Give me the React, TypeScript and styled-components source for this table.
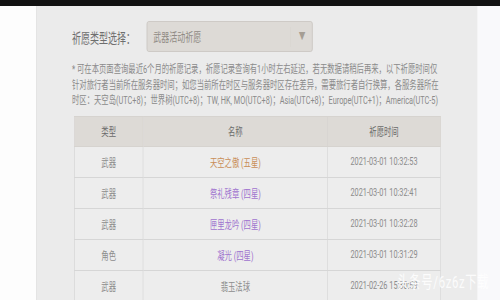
import React from "react";
import styled, { createGlobalStyle } from "styled-components";

const Global = createGlobalStyle`
  html, body { margin: 0; padding: 0; background: #f9f9fb; overflow: hidden; }
  body { font-family: Roboto, "Noto Sans CJK SC", sans-serif; }
`;

const Stage = styled.div`
  width: 750px;
  height: 300px;
  overflow: hidden;
  transform: scaleX(0.6667);
  transform-origin: 0 0;
  position: relative;
  background: #f9f9fb;
`;

const TopBar = styled.div`
  height: 6px;
  background: #121212;
`;

const Body = styled.div`
  display: flex;
  height: 294px;
  background: linear-gradient(to right, #fdfdfd 0, #fdfdfd 54px, transparent 54px);
`;

const Panel = styled.div`
  margin-left: 54px;
  width: 662px;
  box-sizing: border-box;
  background: #ebebeb;
  border-left: 1px solid #e2e2e2;
  padding: 15px 0 0 53px;
  display: flex;
  flex-direction: column;
`;

const SelectRow = styled.div`
  display: flex;
  align-items: center;
`;

const Label = styled.div`
  width: 112px;
  font-size: 13.5px;
  color: #6e6e6e;
  white-space: nowrap;
`;

const Select = styled.div`
  width: 249px;
  height: 31px;
  box-sizing: border-box;
  display: flex;
  align-items: center;
  justify-content: space-between;
  background: #dddad6;
  border: 1px solid #c9c5c0;
  border-radius: 3px;
  padding: 0 10px 0 9px;
  font-size: 12px;
  color: #8f8a84;
`;

const Arrow = styled.span`
  font-size: 10px;
  color: #a59e94;
  padding-left: 12px;
  border-left: 1px solid #d8d5d1;
  line-height: 20px;
`;

const Note = styled.div`
  margin-top: 10px;
  font-size: 11px;
  line-height: 15.5px;
  color: #8a8a8a;
`;

const NoteLine = styled.div`
  white-space: nowrap;
`;

const Table = styled.table`
  margin-top: 7px;
  margin-left: 3px;
  width: 546px;
  border-collapse: collapse;
  table-layout: fixed;
  font-size: 11px;
`;

const Th = styled.th<{ $w: number }>`
  width: ${(p) => p.$w}px;
  height: 29px;
  padding: 0;
  background: #dddad6;
  color: #6a6a6a;
  font-weight: normal;
  border: 1px solid #d6d3cf;
  text-align: center;
`;

const Td = styled.td<{ $tone?: "gold" | "purple" | "plain" }>`
  height: 30px;
  padding: 0;
  background: #ededed;
  border: 1px solid #d6d6d6;
  border-top-width: 1.5px;
  text-align: center;
  color: ${(p) =>
    p.$tone === "gold" ? "#c98d57" : p.$tone === "purple" ? "#9f73cf" : "#8c8c8c"};
`;

const Watermark = styled.div`
  position: absolute;
  left: 596px;
  top: 268px;
  font-size: 17px;
  color: rgba(255, 255, 255, 0.85);
  white-space: nowrap;
  letter-spacing: 1px;
`;

type Row = { type: string; name: string; tone: "gold" | "purple" | "plain"; time: string };

const rows: Row[] = [
  { type: "武器", name: "天空之傲 (五星)", tone: "gold", time: "2021-03-01 10:32:53" },
  { type: "武器", name: "祭礼残章 (四星)", tone: "purple", time: "2021-03-01 10:32:41" },
  { type: "武器", name: "匣里龙吟 (四星)", tone: "purple", time: "2021-03-01 10:32:28" },
  { type: "角色", name: "凝光 (四星)", tone: "purple", time: "2021-03-01 10:31:29" },
  { type: "武器", name: "翡玉法球", tone: "plain", time: "2021-02-26 15:30:59" },
];

export default function App() {
  return (
    <>
      <Global />
      <Stage>
        <TopBar />
        <Body>
          <Panel>
            <SelectRow>
              <Label>祈愿类型选择：</Label>
              <Select>
                <span>武器活动祈愿</span>
                <Arrow>▼</Arrow>
              </Select>
            </SelectRow>
            <Note>
              <NoteLine>* 可在本页面查询最近6个月的祈愿记录，祈愿记录查询有1小时左右延迟，若无数据请稍后再来，以下祈愿时间仅</NoteLine>
              <NoteLine>针对旅行者当前所在服务器时间；如您当前所在时区与服务器时区存在差异，需要旅行者自行换算，各服务器所在</NoteLine>
              <NoteLine>时区：天空岛(UTC+8)；世界树(UTC+8)；TW, HK, MO(UTC+8)；Asia(UTC+8)；Europe(UTC+1)；America(UTC-5)</NoteLine>
            </Note>
            <Table>
              <thead>
                <tr>
                  <Th $w={102}>类型</Th>
                  <Th $w={276}>名称</Th>
                  <Th $w={168}>祈愿时间</Th>
                </tr>
              </thead>
              <tbody>
                {rows.map((r, i) => (
                  <tr key={i}>
                    <Td>{r.type}</Td>
                    <Td $tone={r.tone}>{r.name}</Td>
                    <Td>{r.time}</Td>
                  </tr>
                ))}
              </tbody>
            </Table>
          </Panel>
        </Body>
        <Watermark>头条号/6z6z下载</Watermark>
      </Stage>
    </>
  );
}
